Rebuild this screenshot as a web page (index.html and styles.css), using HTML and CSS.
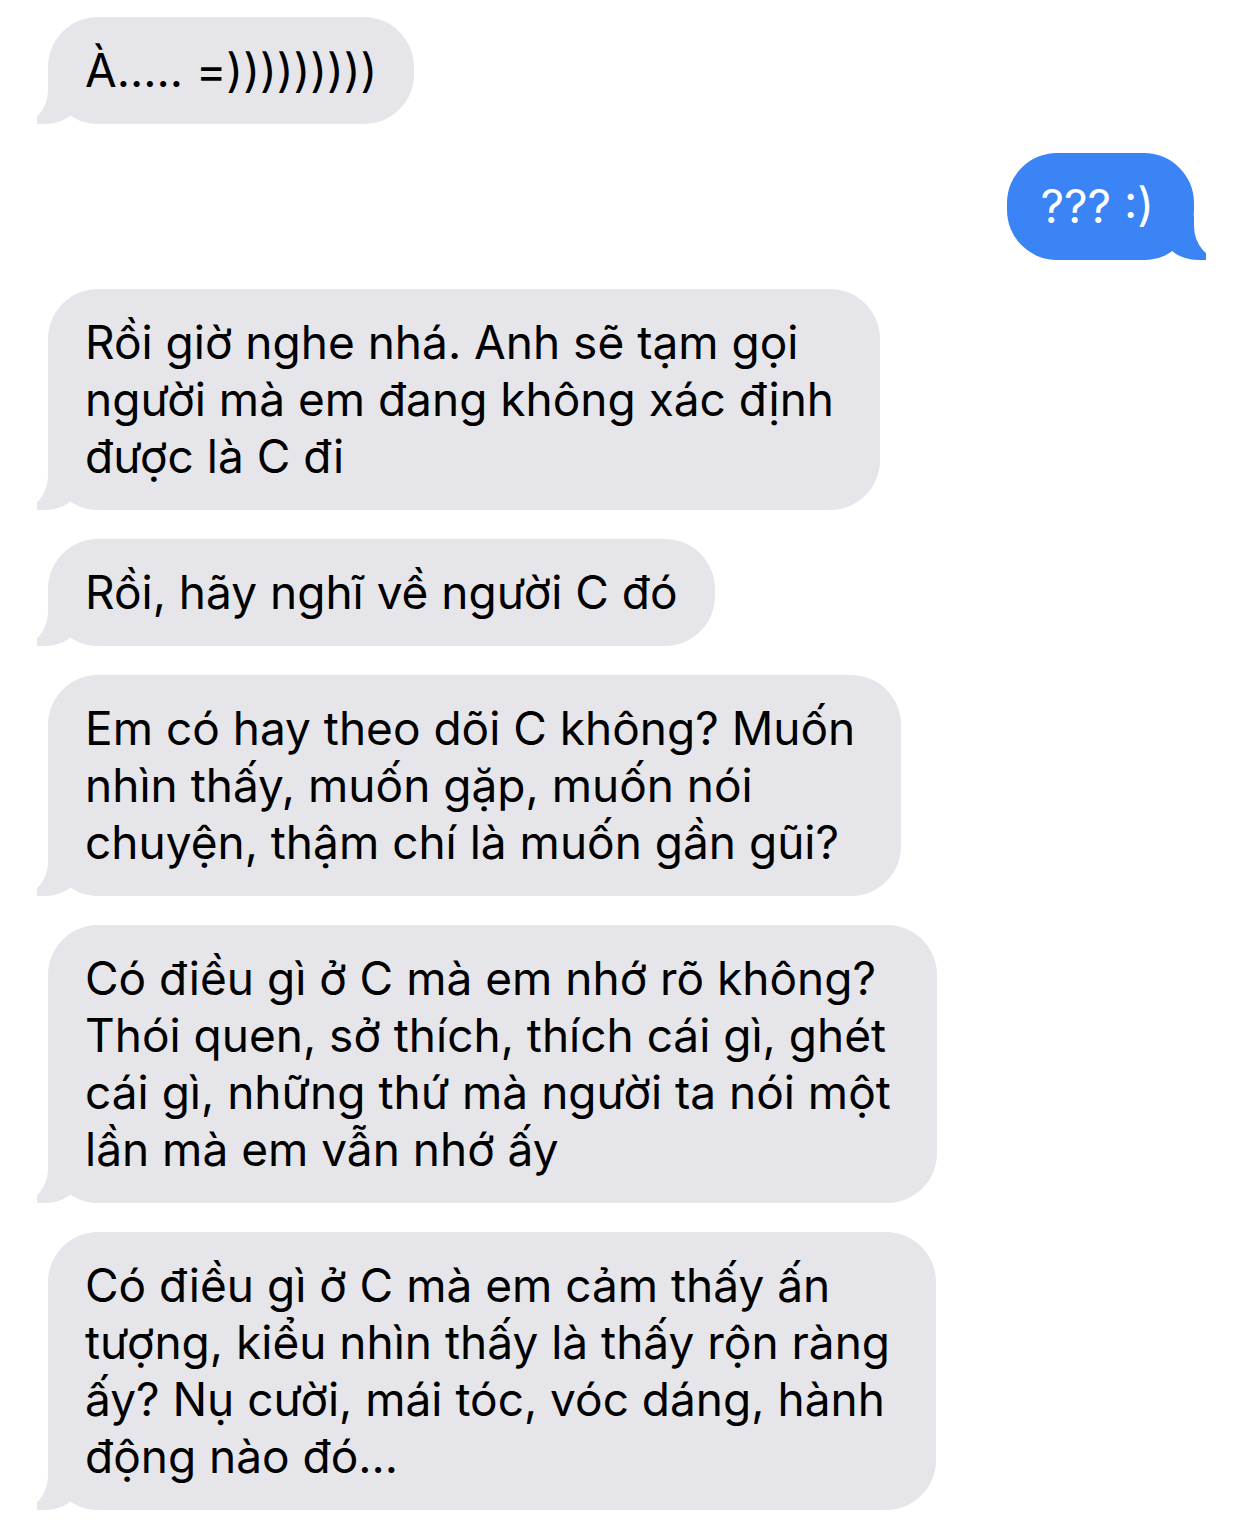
FILE: index.html
```html
<!DOCTYPE html>
<html lang="vi">
<head>
<meta charset="utf-8">
<title>Tin nhắn</title>
<link rel="stylesheet" href="styles.css">
</head>
<body>
<div class="thread">
  <div class="bubble in">À..... =)))))))))</div>
  <div class="bubble out">??? :)</div>
  <div class="bubble in multi">Rồi giờ nghe nhá. Anh sẽ tạm gọi<br>người mà em đang không xác định<br>được là C đi</div>
  <div class="bubble in">Rồi, hãy nghĩ về người C đó</div>
  <div class="bubble in multi">Em có hay theo dõi C không? Muốn<br>nhìn thấy, muốn gặp, muốn nói<br>chuyện, thậm chí là muốn gần gũi?</div>
  <div class="bubble in multi">Có điều gì ở C mà em nhớ rõ không?<br>Thói quen, sở thích, thích cái gì, ghét<br>cái gì, những thứ mà người ta nói một<br>lần mà em vẫn nhớ ấy</div>
  <div class="bubble in multi">Có điều gì ở C mà em cảm thấy ấn<br>tượng, kiểu nhìn thấy là thấy rộn ràng<br>ấy? Nụ cười, mái tóc, vóc dáng, hành<br>động nào đó...</div>
</div>
</body>
</html>
```

FILE: styles.css
```css
html, body {
  margin: 0;
  padding: 0;
  background: #ffffff;
}

body {
  font-family: "Inter", "Noto Sans", "DejaVu Sans", sans-serif;
  font-size: 46px;
  line-height: 57px;
  color: #000000;
}

.thread {
  display: flex;
  flex-direction: column;
  align-items: flex-start;
  gap: 29px;
  padding: 17px 48px 10px 48px;
}

.bubble {
  position: relative;
  padding: 25px 37px 25px 37px;
  border-radius: 50px;
  white-space: nowrap;
}

.bubble.multi {
  padding-right: 46px;
}

.in {
  background: #e5e5ea;
  color: #000000;
}

.out {
  align-self: flex-end;
  background: #3b84f5;
  color: #ffffff;
  padding-left: 33px;
  padding-right: 40px;
}

.in::before,
.in::after,
.out::before,
.out::after {
  content: "";
  position: absolute;
  bottom: 0;
  height: 44px;
}

.in::before {
  left: -11px;
  width: 42px;
  background: #e5e5ea;
  border-bottom-right-radius: 34px 26px;
}

.in::after {
  left: -40px;
  width: 40px;
  background: #ffffff;
  border-bottom-right-radius: 30px 34px;
}

.out::before {
  right: -12px;
  width: 42px;
  background: #3b84f5;
  border-bottom-left-radius: 34px 26px;
}

.out::after {
  right: -40px;
  width: 40px;
  background: #ffffff;
  border-bottom-left-radius: 30px 34px;
}
```
